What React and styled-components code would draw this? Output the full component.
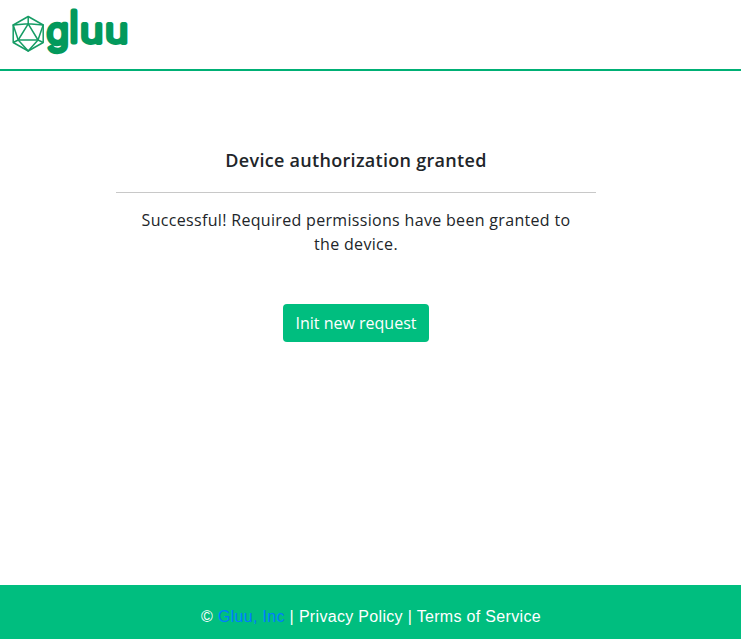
import React from "react";
import styled, { createGlobalStyle } from "styled-components";

const GlobalStyle = createGlobalStyle`
  * { box-sizing: border-box; }
  body { margin: 0; background: #fff; }
`;

const Page = styled.div`
  display: flex;
  flex-direction: column;
  height: 639px;
  overflow: hidden;
  background: #fff;
  color: #212529;
  font-family: "Open Sans", sans-serif;
`;

const Header = styled.header`
  flex: none;
  height: 71px;
  border-bottom: 2px solid #00b075;
`;

const Logo = styled.svg`
  display: block;
  width: 140px;
  height: 62px;
`;

const Wordmark = styled.text`
  font-family: "Inter", sans-serif;
  font-size: 33px;
  font-weight: 300;
  fill: #03995c;
  stroke: #03995c;
  stroke-width: 3.8px;
  stroke-linejoin: round;
`;

const Main = styled.main`
  flex: 1;
  display: flex;
  flex-direction: column;
  align-items: center;
  width: 480px;
  margin-left: 116px;
  padding-top: 76px;
  text-align: center;
`;

const Title = styled.h1`
  margin: 0;
  font-size: 18px;
  font-weight: 600;
  line-height: 27px;
  letter-spacing: 0.3px;
`;

const Divider = styled.hr`
  width: 100%;
  margin: 18px 0 15px;
  border: 0;
  border-top: 1px solid #c8c8c8;
`;

const Message = styled.p`
  width: 450px;
  margin: 0;
  font-size: 16px;
  line-height: 24px;
  letter-spacing: 0.32px;
`;

const Button = styled.button`
  height: 38px;
  width: 146px;
  margin-top: 48px;
  padding: 0;
  border: 0;
  border-radius: 4px;
  background: #00be7f;
  color: #fff;
  font: 400 16px/24px "Open Sans", sans-serif;
`;

const Footer = styled.footer`
  flex: none;
  height: 54px;
  padding: 20px 0 0 1px;
  background: #00be7f;
  color: #fff;
  text-align: center;
  font: 16px/24px "Liberation Sans", Arial, sans-serif;
  letter-spacing: 0.32px;
`;

const Link = styled.a`
  color: ${(p) => (p.$brand ? "#007bff" : "#fff")};
  text-decoration: none;
`;

function GluuLogo() {
  return (
    <Logo viewBox="0 0 140 62" role="img" aria-label="gluu">
      <g fill="none" stroke="#169c65" strokeWidth="1.5" strokeLinejoin="round">
        <path d="M28.2 16.5 43.2 25v17.5l-15 8.5-15-8.5V25z" />
        <path d="M28.2 23.8 38 40H18.2z" />
        <path d="M28.2 16.5v7.3L13.2 25l5 15-5 2.5M28.2 23.8l15 1.2L38 40l5.2 2.5M18.2 40l10 11L38 40" />
      </g>
      <Wordmark transform="translate(46.5 43.9) scale(1.13 1.12)">g</Wordmark>
      <Wordmark transform="translate(69.5 42.3) scale(1.15 1.29)">l</Wordmark>
      <Wordmark transform="translate(79.9 42.6) scale(1.2 1.02)">u</Wordmark>
      <Wordmark transform="translate(104.9 42.6) scale(1.2 1.02)">u</Wordmark>
    </Logo>
  );
}

export default function App() {
  return (
    <Page>
      <GlobalStyle />
      <Header><GluuLogo /></Header>
      <Main>
        <Title>Device authorization granted</Title>
        <Divider />
        <Message>Successful! Required permissions have been granted to the device.</Message>
        <Button type="button">Init new request</Button>
      </Main>
      <Footer>
        © <Link $brand href="#">Gluu, Inc</Link> | <Link href="#">Privacy Policy</Link> | <Link href="#">Terms of Service</Link>
      </Footer>
    </Page>
  );
}
